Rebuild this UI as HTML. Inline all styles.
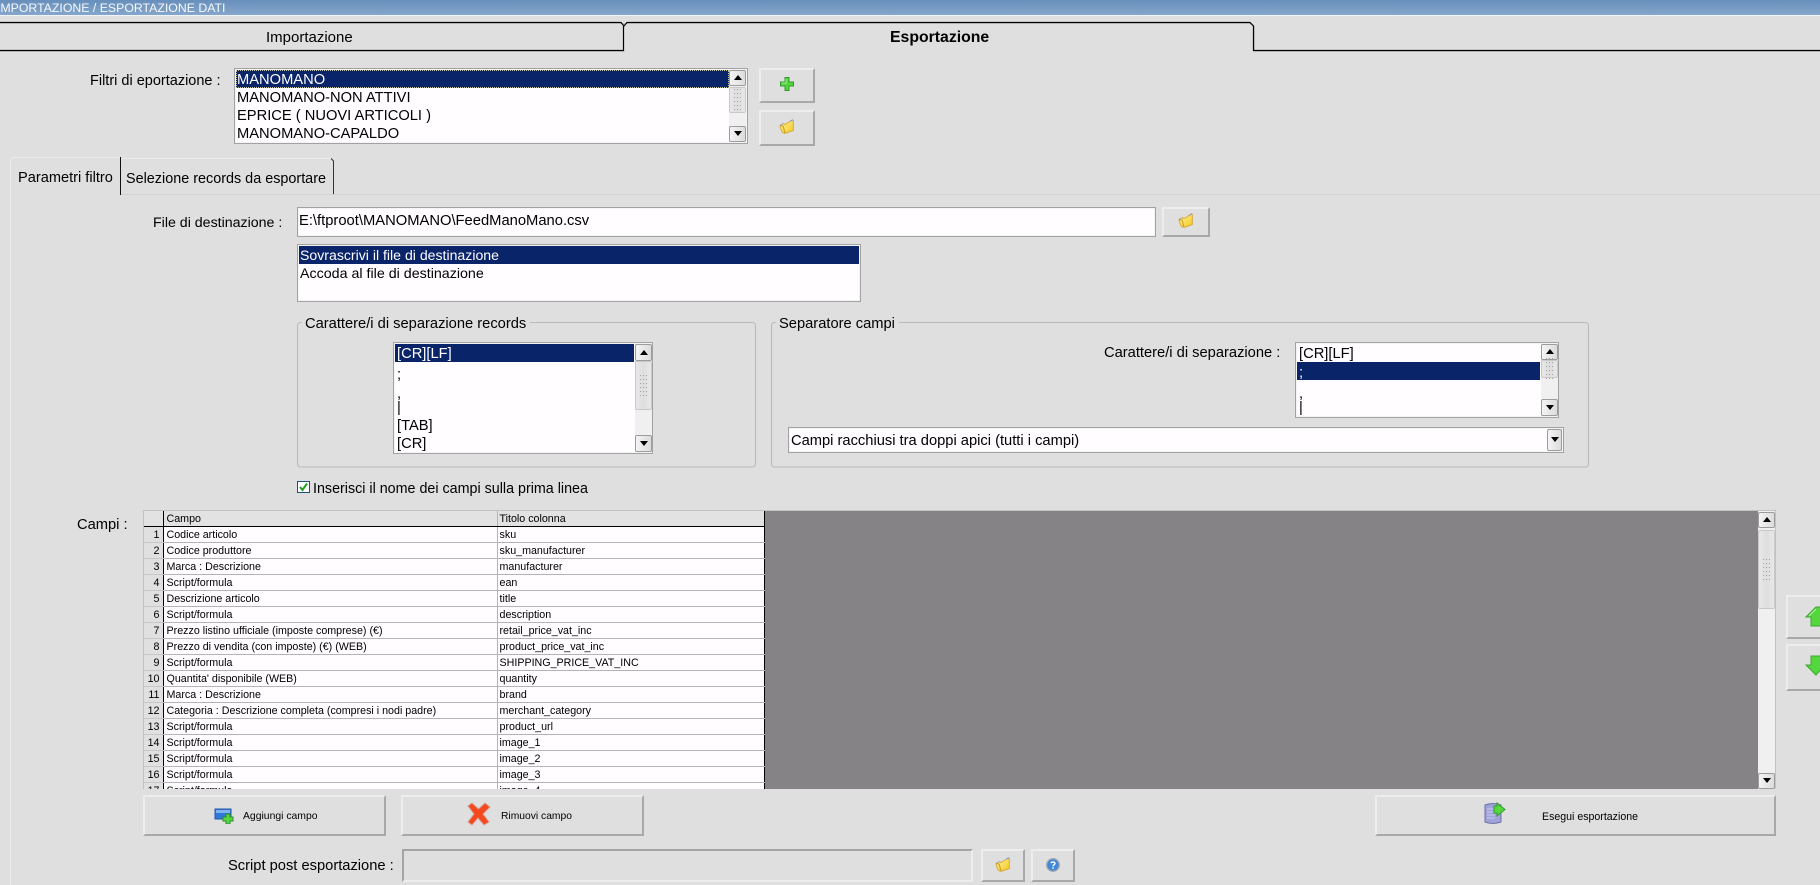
<!DOCTYPE html>
<html><head><meta charset="utf-8"><title>Importazione / Esportazione dati</title>
<style>
html,body{margin:0;padding:0;width:1820px;height:885px;overflow:hidden;background:#dfdfdf;font-family:"Liberation Sans",sans-serif;color:#000}
.a,.t,.b,.box,.sel,.sb,.sb i,.i{position:absolute}
.t{white-space:nowrap;line-height:18px;font-size:14.7px;margin-top:1px}
.w{color:#fffdff}
.b{box-sizing:border-box;background:#dfdfdf;border:2px solid;border-color:#ededed #a8a8a8 #a8a8a8 #ededed}
.box{box-sizing:border-box;background:#fffdff;border:1px solid #a2a2a2;box-shadow:inset 0 0 0 1px #f4f4f4}
.sel{background:#0a246a}
.sb{background:#f0f0f0}
.sb i{display:block;box-sizing:border-box;left:0;right:0;background:linear-gradient(90deg,#f4f4f4,#dcdcdc);border:1px solid #9c9c9c;border-radius:2px}
.sb i.th{background:linear-gradient(90deg,#e8e8e8,#dedede 50%,#e8e8e8);border:1px solid #c8c8c8}
.sb i.th:after{content:"";position:absolute;left:4px;right:4px;top:50%;height:22px;margin-top:-11px;background:radial-gradient(circle at .5px .5px,#a0a0a0 .7px,transparent .8px) 0 0/3px 4px}
.up:after,.dn:after{content:"";position:absolute;left:50%;top:50%;margin:-3px 0 0 -4px;border:4px solid transparent}
.up:after{border-bottom:5px solid #000;border-top:0}
.dn:after{border-top:5px solid #000;border-bottom:0}
table{border-collapse:collapse;table-layout:fixed;position:absolute;left:0;top:0;width:620px;font-size:10.7px}
td{height:13px;padding:2px 0 0 3px;border-bottom:1px solid #b4b4b4;border-right:1px solid #b4b4b4;background:#fffdff;line-height:13px;white-space:nowrap;overflow:hidden}
td.n{background:#e0e0e0;text-align:right;padding:2px 3px 0 0;border-right:1px solid #000;border-bottom:1px solid #c8c8c8}
tr.h td{background:#e2e2e2;border-bottom:1px solid #000;border-right:1px solid #b4b4b4}
tr.h td.n{border-right:1px solid #000}
td.t2{padding-left:2px}
tr td.l,tr.h td.l{border-right:1px solid #000}
</style></head><body>
<svg width="0" height="0" style="position:absolute"><defs>
<linearGradient id="fg" x1="0" y1="0" x2="1" y2="1"><stop offset="0" stop-color="#fff3a0"/><stop offset="1" stop-color="#f5c820"/></linearGradient>
<symbol id="plus" viewBox="0 0 14 14"><path d="M5 .5h4v4.500h4.500v4H9v4.500H5V9H.5V5H5z" fill="#54d63f" stroke="#2f9c2a"/><path d="M6 2v4H2" fill="none" stroke="#a8f090"/></symbol>
<symbol id="folder" viewBox="0 0 15 15"><path d="M1 6.500L4.500 4.500 6 5.500 11 2.500 13.500 .8 14.300 1.500V11.500L6 14.300 3.500 13.500 1.800 10z" fill="url(#fg)" stroke="#d8a838"/><path d="M1 6.500l3 .5 2 7" fill="none" stroke="#c89a20"/><path d="M11 2.300L14 .8" stroke="#7a9ad8" fill="none"/><path d="M1.500 6L4 4.800" stroke="#9ab0d8" fill="none"/></symbol>
<symbol id="help" viewBox="0 0 14 14"><circle cx="7" cy="7" r="6.300" fill="#3f88dc" stroke="#a4a4ac" stroke-width="1.300"/><path d="M5 5.200c.4-1.600 4-1.600 4 .3 0 1.300-2 1.300-2 2.700" fill="none" stroke="#fff" stroke-width="1.400"/><rect x="6.300" y="9.300" width="1.500" height="1.500" fill="#fff"/></symbol>
</defs></svg>

<div class="a" style="left:0;top:0;width:1820px;height:15px;background:linear-gradient(#678fbb,#86a6cb)"></div>
<div class="a" style="left:0;top:15px;width:1820px;height:1px;background:#f2f5f8"></div>
<div class="t w" style="left:-3px;top:-2px;font-size:12.3px;color:#f6f8fb">IMPORTAZIONE / ESPORTAZIONE DATI</div>

<svg class="a" style="left:0;top:0" width="1820" height="885" fill="none">
<path d="M0 23.500H1250L1254.500 27V51.500H1820M0 51.500H624.500" stroke="#c9c9c9"/>
<path d="M0 22.500H621L624 26 627 22.500H1250L1253.500 26V50.500H1820" stroke="#000" stroke-width="1.200"/>
<path d="M0 50.500H623.500V26" stroke="#000" stroke-width="1.200"/>
<path d="M10.500 885V160L13 157.500H120" stroke="#ececec"/>
<path d="M120.500 157V195" stroke="#111"/>
<path d="M121 158.500H331L333.500 161V194" stroke="#333"/>
<path d="M121 158.500H331" stroke="#ececec"/>
<path d="M121 194.500H1820" stroke="#d2d2d2"/>
<rect x="297.500" y="322.500" width="458" height="144.500" rx="3" stroke="#bababa" stroke-width="1.100"/>
<rect x="771.500" y="322.500" width="817" height="144.500" rx="3" stroke="#bababa" stroke-width="1.100"/>
</svg>

<div class="t" style="left:266px;top:28px;font-size:15px">Importazione</div>
<div class="t" style="left:890px;top:28px;font-size:15.800px;font-weight:bold">Esportazione</div>

<div class="t" style="left:90px;top:71px;font-size:14.5px">Filtri di eportazione :</div>
<div class="box" style="left:234px;top:68px;width:514px;height:76px"></div>
<div class="sel" style="left:236px;top:70px;width:493px;height:18px;outline:1px dotted #c8c8a0;outline-offset:-1px"></div>
<div class="t w" style="left:237px;top:70px">MANOMANO</div>
<div class="t" style="left:237px;top:88px">MANOMANO-NON ATTIVI</div>
<div class="t" style="left:237px;top:106px">EPRICE ( NUOVI ARTICOLI )</div>
<div class="t" style="left:237px;top:124px">MANOMANO-CAPALDO</div>
<div class="sb" style="left:729px;top:70px;width:17px;height:72px"><i class="up" style="top:0;height:16px"></i><i class="th" style="top:17px;height:26px"></i><i class="dn" style="top:56px;height:16px"></i></div>

<div class="b" style="left:759px;top:68px;width:56px;height:35px"></div>
<svg class="i" style="left:780px;top:77px" width="14" height="14"><use href="#plus"/></svg>
<div class="b" style="left:759px;top:110px;width:56px;height:36px"></div>
<svg class="i" style="left:779px;top:119px" width="15" height="15"><use href="#folder"/></svg>

<div class="t" style="left:18px;top:168px;font-size:14.6px">Parametri filtro</div>
<div class="t" style="left:126px;top:169px;font-size:14.4px">Selezione records da esportare</div>

<div class="t" style="left:153px;top:213px;font-size:14.2px">File di destinazione :</div>
<div class="box" style="left:297px;top:207px;width:859px;height:30px"></div>
<div class="t" style="left:299px;top:211px;font-size:14.75px">E:\ftproot\MANOMANO\FeedManoMano.csv</div>
<div class="b" style="left:1162px;top:207px;width:48px;height:30px"></div>
<svg class="i" style="left:1178px;top:213px" width="15" height="15"><use href="#folder"/></svg>

<div class="box" style="left:297px;top:244px;width:564px;height:58px"></div>
<div class="sel" style="left:299px;top:246px;width:560px;height:18px"></div>
<div class="t w" style="left:300px;top:245px;font-size:14.1px">Sovrascrivi il file di destinazione</div>
<div class="t" style="left:300px;top:264px;font-size:14.25px">Accoda al file di destinazione</div>

<div class="a" style="left:302px;top:316px;width:228px;height:14px;background:#dfdfdf"></div>
<div class="t" style="left:305px;top:314px">Carattere/i di separazione records</div>
<div class="box" style="left:393px;top:342px;width:260px;height:112px"></div>
<div class="sel" style="left:395px;top:344px;width:239px;height:18px"></div>
<div class="t w" style="left:397px;top:344px">[CR][LF]</div>
<div class="t" style="left:397px;top:365px">;</div>
<div class="t" style="left:397px;top:384px">,</div>
<div class="t" style="left:397px;top:398px">|</div>
<div class="t" style="left:397px;top:416px">[TAB]</div>
<div class="t" style="left:397px;top:434px">[CR]</div>
<div class="sb" style="left:635px;top:344px;width:17px;height:108px"><i class="up" style="top:0;height:17px"></i><i class="th" style="top:17px;height:49px"></i><i class="dn" style="top:91px;height:17px"></i></div>

<div class="a" style="left:776px;top:316px;width:123px;height:14px;background:#dfdfdf"></div>
<div class="t" style="left:779px;top:314px">Separatore campi</div>
<div class="t" style="left:1104px;top:343px">Carattere/i di separazione :</div>
<div class="box" style="left:1295px;top:342px;width:264px;height:76px"></div>
<div class="t" style="left:1299px;top:344px">[CR][LF]</div>
<div class="sel" style="left:1297px;top:362px;width:243px;height:18px"></div>
<div class="t w" style="left:1299px;top:363px">;</div>
<div class="t" style="left:1299px;top:384px">,</div>
<div class="t" style="left:1299px;top:398px">|</div>
<div class="sb" style="left:1541px;top:344px;width:17px;height:72px"><i class="up" style="top:0;height:16px"></i><i class="th" style="top:16px;height:18px"></i><i class="dn" style="top:55px;height:17px"></i></div>

<div class="box" style="left:788px;top:427px;width:776px;height:26px"></div>
<div class="t" style="left:791px;top:431px">Campi racchiusi tra doppi apici (tutti i campi)</div>
<div class="sb" style="left:1547px;top:429px;width:15px;height:22px;background:none"><i class="dn" style="top:0;height:22px"></i></div>

<div class="a" style="left:297px;top:481px;width:13px;height:12px;box-sizing:border-box;border:1px solid #1c5180;background:#fffdff"></div>
<svg class="i" style="left:297px;top:481px" width="13" height="12" fill="none"><path d="M3 6l2.500 3L10 2.500" stroke="#21a121" stroke-width="2"/></svg>
<div class="t" style="left:313px;top:479px;font-size:14.3px">Inserisci il nome dei campi sulla prima linea</div>

<div class="t" style="left:77px;top:515px">Campi :</div>

<div class="a" style="left:143px;top:510px;width:1633px;height:279px;box-sizing:border-box;border:1px solid #c2c2c2;border-bottom:0;overflow:hidden;background:#858385">
<table>
<colgroup><col style="width:19px"><col style="width:334px"><col style="width:267px"></colgroup>
<tr class="h"><td class="n"></td><td>Campo</td><td class="l t2">Titolo colonna</td></tr>
<tr><td class="n">1</td><td>Codice articolo</td><td class="l t2">sku</td></tr>
<tr><td class="n">2</td><td>Codice produttore</td><td class="l t2">sku_manufacturer</td></tr>
<tr><td class="n">3</td><td>Marca : Descrizione</td><td class="l t2">manufacturer</td></tr>
<tr><td class="n">4</td><td>Script/formula</td><td class="l t2">ean</td></tr>
<tr><td class="n">5</td><td>Descrizione articolo</td><td class="l t2">title</td></tr>
<tr><td class="n">6</td><td>Script/formula</td><td class="l t2">description</td></tr>
<tr><td class="n">7</td><td>Prezzo listino ufficiale (imposte comprese) (€)</td><td class="l t2">retail_price_vat_inc</td></tr>
<tr><td class="n">8</td><td>Prezzo di vendita (con imposte) (€) (WEB)</td><td class="l t2">product_price_vat_inc</td></tr>
<tr><td class="n">9</td><td>Script/formula</td><td class="l t2">SHIPPING_PRICE_VAT_INC</td></tr>
<tr><td class="n">10</td><td>Quantita' disponibile (WEB)</td><td class="l t2">quantity</td></tr>
<tr><td class="n">11</td><td>Marca : Descrizione</td><td class="l t2">brand</td></tr>
<tr><td class="n">12</td><td>Categoria : Descrizione completa (compresi i nodi padre)</td><td class="l t2">merchant_category</td></tr>
<tr><td class="n">13</td><td>Script/formula</td><td class="l t2">product_url</td></tr>
<tr><td class="n">14</td><td>Script/formula</td><td class="l t2">image_1</td></tr>
<tr><td class="n">15</td><td>Script/formula</td><td class="l t2">image_2</td></tr>
<tr><td class="n">16</td><td>Script/formula</td><td class="l t2">image_3</td></tr>
<tr><td class="n">17</td><td>Script/formula</td><td class="l t2">image_4</td></tr>
</table>
<div class="sb" style="left:1614px;top:0;width:17px;height:278px"><i class="up" style="top:1px;height:16px"></i><i class="th" style="top:19px;height:79px"></i><i class="dn" style="top:262px;height:16px"></i></div>
</div>

<div class="b" style="left:1786px;top:595px;width:50px;height:44px;border-right:0"></div>
<svg class="i" style="left:1805px;top:606px" width="15" height="21"><path d="M11 1L1 11H6V20H20V1z" fill="#55d63f" stroke="#3da52f"/><path d="M11 3L4 10" stroke="#b4f5a0"/></svg>
<div class="b" style="left:1786px;top:644px;width:50px;height:47px;border-right:0"></div>
<svg class="i" style="left:1805px;top:655px" width="15" height="21"><path d="M6 1V10H1L11 20 20 10V1z" fill="#55d63f" stroke="#3da52f"/></svg>

<div class="b" style="left:143px;top:795px;width:243px;height:41px"></div>
<svg class="i" style="left:214px;top:808px" width="20" height="16"><rect x="1" y="1" width="16" height="10" fill="#2f78dc" stroke="#235aa8"/><rect x="2" y="2" width="14" height="3" fill="#7fb2ee"/><path d="M12 6h4v3h3v4h-3v3h-4v-3H9V9h3z" fill="#54d63f" stroke="#2f8f2a"/></svg>
<div class="t" style="left:243px;top:807px;font-size:10.4px">Aggiungi campo</div>

<div class="b" style="left:401px;top:795px;width:243px;height:41px"></div>
<svg class="i" style="left:467px;top:802px" width="24" height="24"><path d="M5 1L11.500 7 18 1 23 5 16 12 22 20 17 23 11 16 5 23 1 20 7 12 1 4z" fill="#f4481f" stroke="#d8a090"/></svg>
<div class="t" style="left:501px;top:807px;font-size:10.3px">Rimuovi campo</div>

<div class="b" style="left:1375px;top:795px;width:401px;height:41px"></div>
<svg class="i" style="left:1484px;top:802px" width="22" height="23"><path d="M1 3Q9 0 17 3V20Q9 23 1 20z" fill="#9fa3d8" stroke="#6c6fa8"/><path d="M3 7h8M3 10h8M3 13h8M3 16h8" stroke="#c9cbee"/><path d="M10 4h3V1l8 6.500-8 6.500v-3h-3z" fill="#55d63f" stroke="#2f9c2a"/></svg>
<div class="t" style="left:1542px;top:807px;font-size:10.6px">Esegui esportazione</div>

<div class="t" style="left:228px;top:856px">Script post esportazione :</div>
<div class="a" style="left:402px;top:849px;width:571px;height:33px;box-sizing:border-box;border:2px solid;border-color:#a4a4a4 #ededed #ededed #a4a4a4"></div>
<div class="b" style="left:981px;top:849px;width:44px;height:33px"></div>
<svg class="i" style="left:995px;top:857px" width="15" height="15"><use href="#folder"/></svg>
<div class="b" style="left:1031px;top:849px;width:44px;height:33px"></div>
<svg class="i" style="left:1046px;top:858px" width="14" height="14"><use href="#help"/></svg>
</body></html>
